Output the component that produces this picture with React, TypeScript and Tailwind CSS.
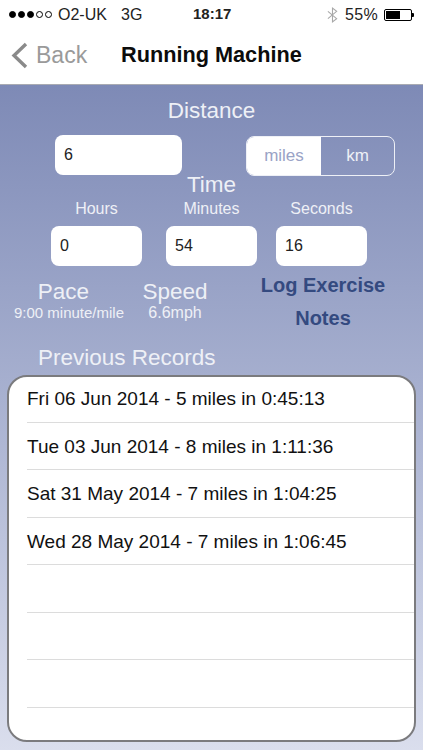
import React from 'react';

const sans = "font-['Liberation_Sans',Arial,sans-serif]";

const records = [
  'Fri 06 Jun 2014 - 5 miles in 0:45:13',
  'Tue 03 Jun 2014 - 8 miles in 1:11:36',
  'Sat 31 May 2014 - 7 miles in 1:04:25',
  'Wed 28 May 2014 - 7 miles in 1:06:45',
  '',
  '',
  '',
  '',
];

const Dot = ({ filled }: { filled: boolean }) => (
  <span className={`w-[7px] h-[7px] rounded-full border border-black ${filled ? 'bg-black' : 'bg-white'}`} />
);

const StatusBar = () => (
  <div className="h-[28px] flex items-center text-[16px] text-[#222] pt-[1px]">
    <div className="flex items-center gap-[2px] ml-[9px] w-[46px]">
      <Dot filled />
      <Dot filled />
      <Dot filled />
      <Dot filled={false} />
      <Dot filled={false} />
    </div>
    <span className="ml-[3px] w-[63px]">O2-UK</span>
    <span className="w-[72px]">3G</span>
    <span className="font-bold text-[15px] w-[134px]">18:17</span>
    <svg width="11" height="16" viewBox="0 0 12 17" fill="none" stroke="#a8a8a8" strokeWidth="1.2" className="mr-[7px]">
      <path d="M1 4.5 L10.5 12.5 L6 16 V1 L10.5 4.5 L1 12.5" />
    </svg>
    <span className="w-[39px] tracking-[0.3px]">55%</span>
    <div className="w-[28px] h-[12px] border border-black rounded-[2px] p-[1px] flex">
      <div className="w-[14px] bg-black" />
    </div>
    <div className="w-[2px] h-[4px] bg-black rounded-r-[1px]" />
  </div>
);

const NavBar = () => (
  <div className="h-[57px] flex items-center border-b border-[#a9abb2] pb-[1px]">
    <svg width="17" height="27" viewBox="0 0 17 27" fill="none" stroke="#8a8a8a" strokeWidth="3.4" className="ml-[11px]">
      <path d="M15 2 L3 13.5 L15 25" />
    </svg>
    <span className="ml-[8px] text-[23px] text-[#9a9a9a] w-[85px]">Back</span>
    <span className="text-[21.7px] font-bold text-[#0c0c0c]">Running Machine</span>
  </div>
);

const Field = ({ value, className }: { value: string; className: string }) => (
  <div className={`h-[40px] bg-white rounded-[8px] flex items-center text-[16px] text-[#222] ${className}`}>
    {value}
  </div>
);

const TimeCol = ({ label, value, className }: { label: string; value: string; className: string }) => (
  <div className={`flex flex-col items-center w-[91px] ${className}`}>
    <span className="text-[16px] text-[#eef0f6] leading-[18px]">{label}</span>
    <Field value={value} className="w-[91px] pl-[9px] mt-[8px]" />
  </div>
);

export default function App() {
  return (
    <div className={`w-[423px] h-[750px] overflow-hidden flex flex-col bg-white ${sans}`}>
      <StatusBar />
      <NavBar />
      <main className="flex-1 flex flex-col bg-gradient-to-b from-[#7e8ab6] to-[#dadeed]">
        <div className="text-center text-[22.5px] leading-[26px] text-[#eef0f6] mt-[13px]">Distance</div>
        <div className="flex mt-[11px]">
          <Field value="6" className="w-[127px] ml-[55px] pl-[9px]" />
          <div className="ml-[64px] w-[149px] h-[40px] mt-[1px] border-[1.5px] border-[#eef0f6] rounded-[8px] overflow-hidden flex text-[17px]">
            <div className="w-[74px] bg-white text-[#9aa3c6] flex items-center justify-center">miles</div>
            <div className="flex-1 text-[#eef0f6] flex items-center justify-center">km</div>
          </div>
        </div>
        <div className="text-center text-[22.5px] leading-[26px] text-[#eef0f6] -mt-[4px]">Time</div>
        <div className="flex mt-[2px]">
          <TimeCol label="Hours" value="0" className="ml-[51px]" />
          <TimeCol label="Minutes" value="54" className="ml-[24px]" />
          <TimeCol label="Seconds" value="16" className="ml-[19px]" />
        </div>
        <div className="flex mt-[7px] text-[#eef0f6]">
          <div className="flex flex-col items-center w-[110px] ml-[14px] mt-[6px]">
            <span className="text-[22.5px] leading-[26px] -ml-[11px]">Pace</span>
            <span className="text-[15px] leading-[15px] whitespace-nowrap">9:00 minute/mile</span>
          </div>
          <div className="flex flex-col items-center w-[80px] ml-[11px] mt-[6px]">
            <span className="text-[22.5px] leading-[26px]">Speed</span>
            <span className="text-[16px] leading-[15px]">6.6mph</span>
          </div>
          <div className="flex flex-col items-center ml-[8px] w-[200px] text-[20px] font-bold text-[#344a80] leading-[24px]">
            <span>Log Exercise</span>
            <span className="mt-[9px]">Notes</span>
          </div>
        </div>
        <div className="text-[22.5px] leading-[26px] text-[#eef0f6] ml-[38px] mt-[15px]">Previous Records</div>
        <div className="ml-[7px] mr-[7px] mt-[4px] h-[367px] border-2 border-[#7b7b7e] rounded-[20px] bg-white overflow-hidden">
          <div className="-mt-[2px]">
            {records.map((r, i) => (
              <div key={i} className="h-[47.5px] pl-[18px]">
                <div className={`h-full flex items-center text-[19px] text-[#111] pt-[2px] ${i < 7 ? 'border-b border-[#dcdcdc]' : ''}`}>
                  {r}
                </div>
              </div>
            ))}
          </div>
        </div>
      </main>
    </div>
  );
}
